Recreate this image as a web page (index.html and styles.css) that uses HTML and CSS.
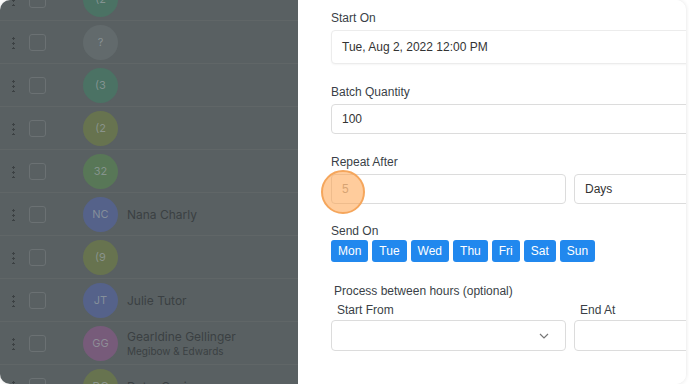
FILE: index.html
```html
<!DOCTYPE html>
<html lang="en">
  <head>
    <meta charset="UTF-8" />
    <meta name="viewport" content="width=device-width, initial-scale=1.0" />
    <title>Schedule Batch</title>
    <link rel="stylesheet" href="styles.css">
  </head>
  <body>
    <div class="frame">
      <aside class="backdrop">
        <ul class="contacts">
          <li class="row"><span class="handle"></span><span class="check"></span><span class="avatar av-teal">(2</span></li>
          <li class="row"><span class="handle"></span><span class="check"></span><span class="avatar av-grey">?</span></li>
          <li class="row"><span class="handle"></span><span class="check"></span><span class="avatar av-teal">(3</span></li>
          <li class="row"><span class="handle"></span><span class="check"></span><span class="avatar av-olive">(2</span></li>
          <li class="row"><span class="handle"></span><span class="check"></span><span class="avatar av-green">32</span></li>
          <li class="row"><span class="handle"></span><span class="check"></span><span class="avatar av-blue">NC</span><div class="who"><span class="name">Nana Charly</span></div></li>
          <li class="row"><span class="handle"></span><span class="check"></span><span class="avatar av-olive">(9</span></li>
          <li class="row"><span class="handle"></span><span class="check"></span><span class="avatar av-blue">JT</span><div class="who"><span class="name">Julie Tutor</span></div></li>
          <li class="row"><span class="handle"></span><span class="check"></span><span class="avatar av-purple">GG</span><div class="who"><span class="name">Gearldine Gellinger</span><span class="company">Megibow &amp; Edwards</span></div></li>
          <li class="row"><span class="handle"></span><span class="check"></span><span class="avatar av-olive">DC</span><div class="who"><span class="name">Detra Covier</span></div></li>
        </ul>
      </aside>

      <section class="panel">
        <form class="form">
          <div class="field first">
            <label class="label">Start On</label>
            <div class="input tall">Tue, Aug 2, 2022 12:00 PM</div>
          </div>

          <div class="field">
            <label class="label">Batch Quantity</label>
            <div class="input">100</div>
          </div>

          <div class="field">
            <label class="label">Repeat After</label>
            <div class="pair">
              <div class="spot">
                <div class="input muted">5</div>
                <span class="click"></span>
              </div>
              <div class="input">Days</div>
            </div>
          </div>

          <div class="field days">
            <label class="label">Send On</label>
            <div class="weekdays">
              <button type="button" class="day">Mon</button>
              <button type="button" class="day">Tue</button>
              <button type="button" class="day">Wed</button>
              <button type="button" class="day">Thu</button>
              <button type="button" class="day">Fri</button>
              <button type="button" class="day">Sat</button>
              <button type="button" class="day">Sun</button>
            </div>
          </div>

          <div class="field hours">
            <p class="caption">Process between hours (optional)</p>
            <div class="pair">
              <div>
                <label class="label sub">Start From</label>
                <div class="input select">
                  <svg class="chevron" width="10" height="6" viewBox="0 0 10 6"><path d="M1 1l4 4 4-4" fill="none" stroke="#777" stroke-width="1.2"/></svg>
                </div>
              </div>
              <div>
                <label class="label sub">End At</label>
                <div class="input select"></div>
              </div>
            </div>
          </div>
        </form>
      </section>
    </div>
  </body>
</html>
```

FILE: styles.css
```css
body {
  margin: 0;
  background: #fff;
  font-family: "Liberation Sans", Arial, sans-serif;
}

.frame {
  width: 686px;
  height: 384px;
  display: flex;
  border-radius: 10px;
  overflow: hidden;
  box-shadow: 0 0 4px rgba(0, 0, 0, 0.12);
}

/* dimmed contact list behind the drawer */
.backdrop {
  width: 298px;
  flex-shrink: 0;
  background: #596062;
  overflow: hidden;
  font-family: Inter, "Liberation Sans", sans-serif;
}

.contacts {
  list-style: none;
  margin: -22px 0 0;
  padding: 0;
}

.row {
  height: 42px;
  display: flex;
  align-items: center;
  border-bottom: 1px solid #606667;
}

.handle {
  width: 3px;
  height: 13px;
  margin-left: 12px;
  background: radial-gradient(circle, #3c4143 1.2px, transparent 1.4px) 0 0 / 3px 5px repeat-y;
}

.check {
  width: 15px;
  height: 15px;
  margin-left: 14px;
  border: 1px solid #6b7173;
  border-radius: 3px;
}

.avatar {
  width: 35px;
  height: 35px;
  margin-left: 37px;
  border-radius: 50%;
  display: flex;
  align-items: center;
  justify-content: center;
  font-size: 11px;
  color: rgba(150, 158, 160, 0.75);
}

.av-teal { background: #4b7264; }
.av-grey { background: #626a6c; }
.av-olive { background: #67734f; }
.av-green { background: #587757; }
.av-blue { background: #55628a; }
.av-purple { background: #775b7a; }

.who {
  margin-left: 9px;
  display: flex;
  flex-direction: column;
  color: #3b4043;
}

.name {
  font-size: 12px;
}

.company {
  font-size: 10px;
  margin-top: 1px;
}

/* settings drawer */
.panel {
  flex: 1;
  background: #fff;
  overflow: hidden;
  padding: 11px 0 0 33px;
  color: #333;
}

.form {
  width: 478px;
}

.field {
  margin-top: 21px;
}

.field.first {
  margin-top: 0;
}

.label {
  display: block;
  font-size: 12px;
  line-height: 14px;
  color: #3a3f47;
  margin-bottom: 5px;
}

.input {
  height: 30px;
  box-sizing: border-box;
  border: 1px solid #dcdcdc;
  border-radius: 4px;
  padding: 0 10px;
  display: flex;
  align-items: center;
  font-size: 12px;
  color: #333;
  background: #fff;
}

.input.tall {
  height: 34px;
  border-color: #ececec;
  box-shadow: 0 1px 2px rgba(0, 0, 0, 0.04);
}

.input.muted {
  color: #a5a5a5;
}

.pair {
  display: grid;
  grid-template-columns: 235px 1fr;
  gap: 8px;
}

.spot {
  position: relative;
}

.click {
  position: absolute;
  left: -10px;
  top: -4px;
  width: 40px;
  height: 40px;
  border-radius: 50%;
  background: rgba(255, 163, 74, 0.55);
  border: 2px solid #f5a65c;
}

.days {
  margin-top: 20px;
}

.days .label {
  margin-bottom: 2px;
}

.weekdays {
  display: flex;
  gap: 4px;
}

.day {
  height: 22px;
  padding: 0 7px;
  border: 0;
  border-radius: 3px;
  background: #2188ee;
  color: #fff;
  font-family: inherit;
  font-size: 12px;
}

.hours {
  margin-top: 22px;
}

.caption {
  margin: 0 0 5px 3px;
  font-size: 12px;
  line-height: 14px;
  color: #3a3f47;
}

.label.sub {
  margin-left: 6px;
  margin-bottom: 3px;
}

.input.select {
  height: 31px;
  justify-content: flex-end;
  padding-right: 16px;
}
```
